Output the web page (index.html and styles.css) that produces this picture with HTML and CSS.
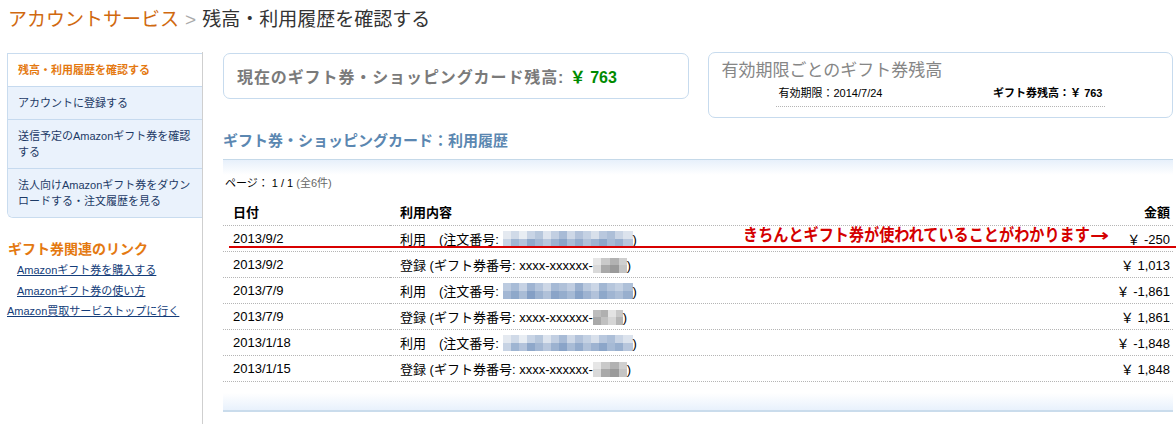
FILE: index.html
```html
<!DOCTYPE html>
<html lang="ja">
<head>
<meta charset="utf-8">
<title>残高・利用履歴を確認する</title>
<link rel="stylesheet" href="styles.css">
</head>
<body>
<header class="crumbs">
  <span class="crumb-root">アカウントサービス</span><span class="crumb-sep">&gt;</span><span class="crumb-cur">残高・利用履歴を確認する</span>
</header>
<div class="layout">
  <aside class="side">
    <ul class="side-nav">
      <li class="side-item is-current">残高・利用履歴を確認する</li>
      <li class="side-item">アカウントに登録する</li>
      <li class="side-item">送信予定のAmazonギフト券を確認する</li>
      <li class="side-item">法人向けAmazonギフト券をダウンロードする・注文履歴を見る</li>
    </ul>
    <h3 class="side-heading">ギフト券関連のリンク</h3>
    <ul class="side-links">
      <li class="sub"><a href="#">Amazonギフト券を購入する</a></li>
      <li class="sub"><a href="#">Amazonギフト券の使い方</a></li>
      <li><a href="#">Amazon買取サービストップに行く</a></li>
    </ul>
  </aside>
  <main class="main">
    <div class="summary">
      <div class="card balance">現在のギフト券・ショッピングカード残高:&nbsp;<span class="amount">￥ 763</span></div>
      <div class="card expiry">
        <div class="expiry-title">有効期限ごとのギフト券残高</div>
        <div class="expiry-row"><span>有効期限：2014/7/24</span><span class="strong">ギフト券残高：￥ 763</span></div>
      </div>
    </div>
    <h2 class="hist-title">ギフト券・ショッピングカード：利用履歴</h2>
    <div class="band band-top"></div>
    <p class="pager">ページ： 1 / 1 <span class="muted">(全6件)</span></p>
    <div class="hist-wrap">
      <table class="hist">
        <colgroup><col class="col-date"><col class="col-desc"><col></colgroup>
        <thead>
          <tr><th>日付</th><th>利用内容</th><th class="amt">金額</th></tr>
        </thead>
        <tbody>
          <tr><td>2013/9/2</td><td>利用　(注文番号: <span class="blur blur-a"></span>)</td><td class="amt">￥ -250</td></tr>
          <tr><td>2013/9/2</td><td>登録 (ギフト券番号: xxxx-xxxxxx-<span class="blur blur-g"></span>)</td><td class="amt">￥ 1,013</td></tr>
          <tr><td>2013/7/9</td><td>利用　(注文番号: <span class="blur blur-b"></span>)</td><td class="amt">￥ -1,861</td></tr>
          <tr><td>2013/7/9</td><td>登録 (ギフト券番号: xxxx-xxxxxx-<span class="blur blur-h"></span>)</td><td class="amt">￥ 1,861</td></tr>
          <tr><td>2013/1/18</td><td>利用　(注文番号: <span class="blur blur-a"></span>)</td><td class="amt">￥ -1,848</td></tr>
          <tr><td>2013/1/15</td><td>登録 (ギフト券番号: xxxx-xxxxxx-<span class="blur blur-g"></span>)</td><td class="amt">￥ 1,848</td></tr>
        </tbody>
      </table>
      <div class="mark-line"></div>
      <div class="mark-note">きちんとギフト券が使われていることがわかります<span class="arrow">→</span></div>
    </div>
    <div class="band band-bottom"></div>
  </main>
</div>
</body>
</html>
```

FILE: styles.css
```css
* { box-sizing: border-box; }

body {
  margin: 0;
  background: #fff;
  color: #000;
  font-family: "Liberation Sans", "Noto Sans CJK JP", sans-serif;
}

/* header breadcrumb */
.crumbs {
  height: 52px;
  padding: 6px 0 0 8px;
  font-size: 19px;
  line-height: 28px;
  white-space: nowrap;
}
.crumb-root { color: #d0690f; }
.crumb-sep { color: #aaa; margin: 0 6px; }
.crumb-cur { color: #333; }

/* two-column layout */
.layout {
  display: flex;
  min-height: 372px;
}

.side {
  flex: none;
  width: 203px;
  border-right: 1px solid #cfcfcf;
  padding-top: 1px;
}

.side-nav {
  list-style: none;
  margin: 0 0 0 7px;
  padding: 0;
  border-top: 1px solid #c9dcef;
  border-left: 1px solid #c9dcef;
  border-bottom: 1px solid #c9dcef;
  border-bottom-left-radius: 6px;
  overflow: hidden;
}
.side-item {
  padding: 8px 10px 8px 10px;
  font-size: 11px;
  line-height: 16px;
  color: #1d3a66;
  background: #eaf2fc;
  border-top: 1px solid #c6daef;
}
.side-item.is-current {
  background: #fff;
  color: #e47911;
  font-weight: bold;
  border-top: none;
}

.side-heading {
  margin: 22px 0 2px 8px;
  font-size: 14px;
  line-height: 18px;
  color: #e47911;
  font-weight: bold;
}
.side-links {
  list-style: none;
  margin: 0;
  padding: 0;
  font-size: 11px;
  line-height: 20.5px;
}
.side-links li { padding-left: 7px; }
.side-links li.sub { padding-left: 17px; }
.side-links a { color: #143d7a; text-decoration: underline; }

/* main */
.main {
  flex: 1;
  min-width: 0;
  padding: 0 3px 0 20px;
}

.summary {
  display: grid;
  grid-template-columns: 1fr 1fr;
  column-gap: 19px;
  align-items: start;
}
.card {
  min-width: 0;
  border: 1px solid #c7dbee;
  border-radius: 7px;
}
.balance {
  margin-top: 1px;
  height: 46px;
  padding: 0 13px;
  display: flex;
  align-items: center;
  font-size: 16px;
  letter-spacing: 0.9px;
  color: #7a7a7a;
  font-weight: bold;
  white-space: nowrap;
}
.amount { color: #008a00; letter-spacing: 0; }

.expiry {
  height: 66px;
  padding: 6px 0 0 13px;
}
.expiry-title {
  font-size: 17px;
  line-height: 24px;
  color: #868686;
}
.expiry-row {
  margin: 3px 0 0 54px;
  width: 329px;
  display: flex;
  justify-content: space-between;
  padding: 0 2px 6px 3px;
  font-size: 11px;
  line-height: 14px;
  border-bottom: 1px dotted #b5b5b5;
}
.strong { font-weight: bold; }

.hist-title {
  margin: 13px 0 8px;
  font-size: 15px;
  line-height: 20px;
  color: #5b87b1;
  font-weight: bold;
}

.band { height: 16px; }
.band-top {
  border-top: 1px solid #c5d9e9;
  background: linear-gradient(#e7f0fb, #fff);
}
.band-bottom {
  margin-top: 11px;
  height: 19px;
  border-bottom: 2px solid #cadcec;
  background: linear-gradient(#fff, #e8f1fc);
}

.pager {
  margin: 0;
  padding-left: 2px;
  font-size: 11px;
  line-height: 16px;
}
.muted { color: #666; }

.hist-wrap {
  position: relative;
  margin-top: 8px;
}
.hist {
  width: 100%;
  border-collapse: collapse;
  table-layout: fixed;
  font-size: 13px;
}
.col-date { width: 167px; }
.col-desc { width: 500px; }
.hist th, .hist td {
  height: 26px;
  padding: 0 0 0 10px;
  text-align: left;
  vertical-align: middle;
  border-bottom: 1px dotted #b5b5b5;
  white-space: nowrap;
}
.hist th { font-weight: bold; }
.hist .amt { text-align: right; padding-right: 3px; }

.blur {
  display: inline-block;
  vertical-align: middle;
  margin-top: -2px;
}
.blur-a, .blur-b {
  width: 130px;
  height: 16px;
  background:
    linear-gradient(90deg, #e4e9f0 0 8px, #d0dae8 8px 16px, #e8edf3 16px 24px, #c8d4e5 24px 32px, #b7c7dc 32px 40px, #dde4ee 40px 48px, #c2cfe2 48px 56px, #a8bbd6 56px 64px, #ced8e7 64px 72px, #b2c2da 72px 80px, #c4d1e3 80px 88px, #d8e0eb 88px 96px, #b9c8de 96px 104px, #adbfd8 104px 112px, #cad5e5 112px 120px, #dce3ed 120px 130px) top / 100% 8px no-repeat,
    linear-gradient(90deg, #c7d3e4 0 8px, #9fb5d2 8px 16px, #b3c3db 16px 24px, #8fa8ca 24px 32px, #a3b7d3 32px 40px, #b8c7dd 40px 48px, #9cb2d0 48px 56px, #8aa4c8 56px 64px, #a9bcd6 64px 72px, #93abcc 72px 80px, #b0c1d9 80px 88px, #9db3d1 88px 96px, #8ca6c9 96px 104px, #a6bad5 104px 112px, #98afce 112px 120px, #b7c6dc 120px 130px) bottom / 100% 8px no-repeat;
}
.blur-b {
  background:
    linear-gradient(90deg, #bccbe0 0 8px, #a8bcd7 8px 16px, #c6d2e4 16px 24px, #9fb4d2 24px 32px, #b5c5dc 32px 40px, #cdd7e6 40px 48px, #a5b9d5 48px 56px, #b0c1d9 56px 64px, #c0cde1 64px 72px, #9ab0cf 72px 80px, #bac9de 80px 88px, #cbd6e6 88px 96px, #a2b7d3 96px 104px, #b6c6dc 104px 112px, #c3d0e2 112px 120px, #aec0d8 120px 130px) top / 100% 8px no-repeat,
    linear-gradient(90deg, #a3b7d4 0 8px, #8ea8ca 8px 16px, #a9bcd6 16px 24px, #849fc5 24px 32px, #9cb2d0 32px 40px, #b0c1d9 40px 48px, #8aa4c8 48px 56px, #95adcd 56px 64px, #a6bad5 64px 72px, #87a2c7 72px 80px, #9eb3d1 80px 88px, #b2c2da 88px 96px, #8ea8ca 96px 104px, #a0b5d2 104px 112px, #acbed7 112px 120px, #98afce 120px 130px) bottom / 100% 8px no-repeat;
}
.blur-g, .blur-h {
  width: 34px;
  height: 15px;
  background:
    linear-gradient(90deg, #e6e6e6 0 8px, #c9c9c9 8px 17px, #b2b2b2 17px 26px, #cfcfcf 26px 34px) top / 100% 7px no-repeat,
    linear-gradient(90deg, #d9d9d9 0 8px, #a9a9a9 8px 17px, #9a9a9a 17px 26px, #c4c4c4 26px 34px) bottom / 100% 8px no-repeat;
}
.blur-h {
  width: 30px;
  background:
    linear-gradient(90deg, #bdbdbd 0 8px, #b0b0b0 8px 15px, #e3e3e3 15px 23px, #c8c8c8 23px 30px) top / 100% 7px no-repeat,
    linear-gradient(90deg, #a9a9a9 0 8px, #c0c0c0 8px 15px, #d6d6d6 15px 23px, #b5b5b5 23px 30px) bottom / 100% 8px no-repeat;
}

/* annotation overlay */
.mark-line {
  position: absolute;
  left: 6px;
  right: -3px;
  top: 47px;
  height: 2px;
  background: #d80000;
}
.mark-note {
  position: absolute;
  left: 520px;
  top: 25px;
  font-size: 17px;
  line-height: 22px;
  font-weight: bold;
  color: #d40000;
  white-space: nowrap;
  transform: scaleX(0.89);
  transform-origin: left center;
}
.arrow {
  display: inline-block;
  font-family: "DejaVu Sans", sans-serif;
  font-weight: bold;
  transform: scaleX(1.5);
  transform-origin: left center;
}
```
